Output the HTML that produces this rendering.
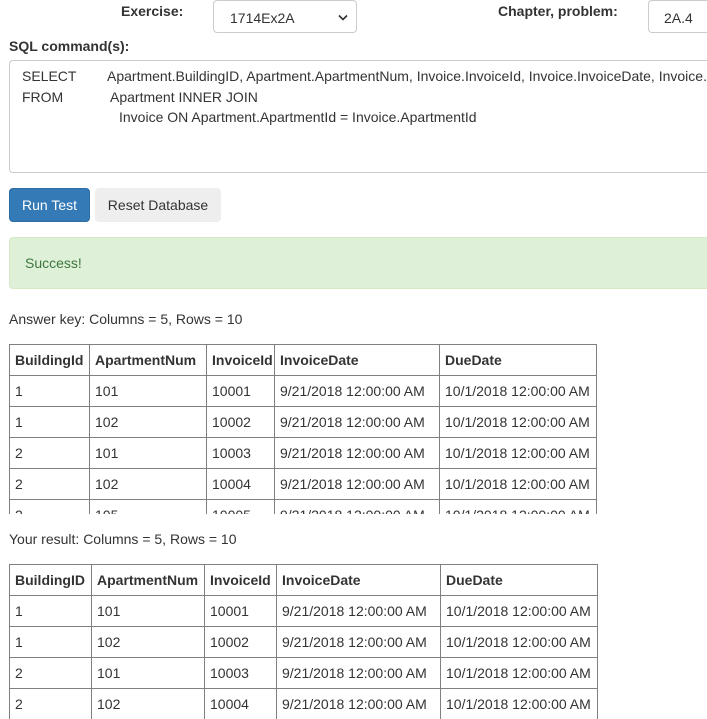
<!DOCTYPE html>
<html><head><meta charset="utf-8"><style>
*{box-sizing:border-box}
html,body{margin:0;width:707px;height:719px;overflow:hidden}
body{font-family:"Liberation Sans",Arial,sans-serif;font-size:14px;color:#333;background:#fff;position:relative}
.a{position:absolute;white-space:nowrap}
b{font-weight:bold}
table{border-collapse:collapse;position:absolute;left:9px;table-layout:fixed}
td,th{border:1px solid #808080;height:31px;padding:0 5px;text-align:left;font-size:14px;white-space:nowrap;overflow:hidden}
th{font-weight:bold}
</style></head><body>
<div class="a" style="left:121px;top:3px"><b>Exercise:</b></div>
<div class="a" style="left:213px;top:0;width:144px;height:33px;border:1px solid #ccc;border-radius:4px;padding:9px 16px;">1714Ex2A<svg style="position:absolute;right:8px;top:13px" width="10" height="7" viewBox="0 0 10 7"><path d="M1 1.5 L5 5.5 L9 1.5" fill="none" stroke="#333" stroke-width="1.6"/></svg></div>
<div class="a" style="left:498px;top:3px"><b>Chapter, problem:</b></div>
<div class="a" style="left:648px;top:0;width:59px;height:33px;border:1px solid #ccc;border-right:none;border-radius:4px 0 0 4px;padding:9px 15px;">2A.4</div>
<div class="a" style="left:9px;top:38px"><b>SQL command(s):</b></div>
<div class="a" style="left:9px;top:60px;width:698px;height:113px;border:1px solid #ccc;border-right:none;border-radius:4px 0 0 4px"></div>
<div class="a" style="left:0;top:60px;width:707px;height:113px;overflow:hidden">
<div class="a" style="left:22px;top:8px">SELECT</div>
<div class="a" style="left:107px;top:8px">Apartment.BuildingID, Apartment.ApartmentNum, Invoice.InvoiceId, Invoice.InvoiceDate, Invoice.DueDate</div>
<div class="a" style="left:22px;top:29px">FROM</div>
<div class="a" style="left:110px;top:29px">Apartment INNER JOIN</div>
<div class="a" style="left:119px;top:49px">Invoice ON Apartment.ApartmentId = Invoice.ApartmentId</div>
</div>
<div class="a" style="left:9px;top:188px;width:81px;height:34px;background:#337ab7;border:1px solid #2e6da4;border-radius:4px;color:#fff;text-align:center;line-height:32px">Run Test</div>
<div class="a" style="left:95px;top:188px;width:126px;height:34px;background:#eee;border-radius:4px;text-align:center;line-height:34px">Reset Database</div>
<div class="a" style="left:9px;top:237px;width:698px;height:52px;background:#dff0d8;border:1px solid #d6e9c6;border-right:none;border-radius:4px 0 0 4px;color:#3c763d;padding:17px 15px">Success!</div>
<div class="a" style="left:9px;top:311px">Answer key: Columns = 5, Rows = 10</div>
<div class="a" style="left:0;top:344px;width:707px;height:170px;overflow:hidden">
<table style="top:0;width:587px">
<col style="width:80px"><col style="width:117px"><col style="width:68px"><col style="width:165px"><col style="width:157px">
<tr><th>BuildingId</th><th>ApartmentNum</th><th>InvoiceId</th><th>InvoiceDate</th><th>DueDate</th></tr>
<tr><td>1</td><td>101</td><td>10001</td><td>9/21/2018 12:00:00 AM</td><td>10/1/2018 12:00:00 AM</td></tr>
<tr><td>1</td><td>102</td><td>10002</td><td>9/21/2018 12:00:00 AM</td><td>10/1/2018 12:00:00 AM</td></tr>
<tr><td>2</td><td>101</td><td>10003</td><td>9/21/2018 12:00:00 AM</td><td>10/1/2018 12:00:00 AM</td></tr>
<tr><td>2</td><td>102</td><td>10004</td><td>9/21/2018 12:00:00 AM</td><td>10/1/2018 12:00:00 AM</td></tr>
<tr><td>2</td><td>105</td><td>10005</td><td>9/21/2018 12:00:00 AM</td><td>10/1/2018 12:00:00 AM</td></tr>
</table></div>
<div class="a" style="left:9px;top:531px">Your result: Columns = 5, Rows = 10</div>
<table style="top:564px;width:588px">
<col style="width:82px"><col style="width:113px"><col style="width:72px"><col style="width:164px"><col style="width:157px">
<tr><th>BuildingID</th><th>ApartmentNum</th><th>InvoiceId</th><th>InvoiceDate</th><th>DueDate</th></tr>
<tr><td>1</td><td>101</td><td>10001</td><td>9/21/2018 12:00:00 AM</td><td>10/1/2018 12:00:00 AM</td></tr>
<tr><td>1</td><td>102</td><td>10002</td><td>9/21/2018 12:00:00 AM</td><td>10/1/2018 12:00:00 AM</td></tr>
<tr><td>2</td><td>101</td><td>10003</td><td>9/21/2018 12:00:00 AM</td><td>10/1/2018 12:00:00 AM</td></tr>
<tr><td>2</td><td>102</td><td>10004</td><td>9/21/2018 12:00:00 AM</td><td>10/1/2018 12:00:00 AM</td></tr>
</table>
</body></html>
